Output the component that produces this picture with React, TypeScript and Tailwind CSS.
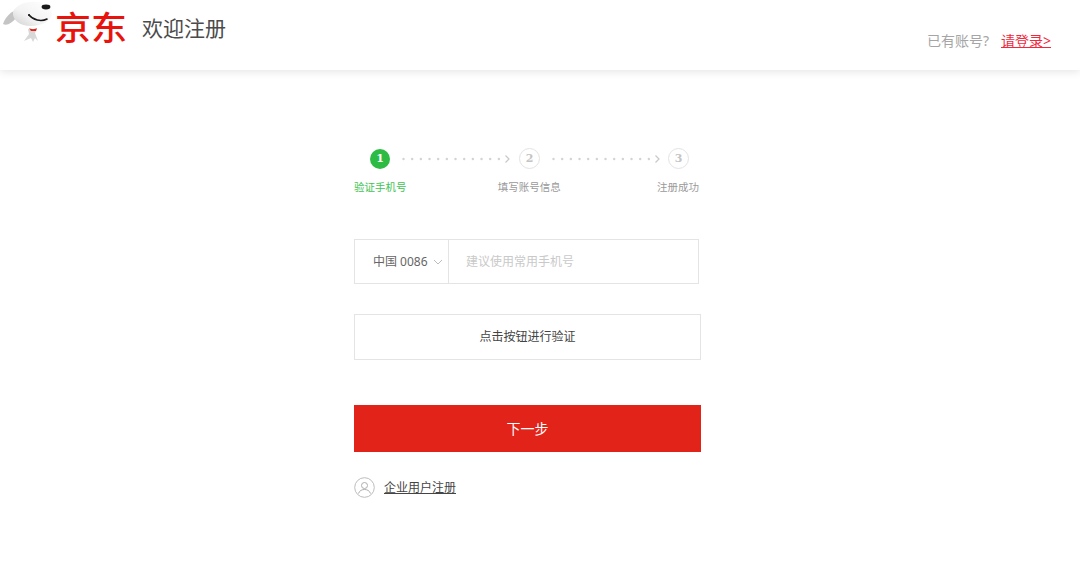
import React from 'react';

const cjk = "font-['Noto_Sans','Noto_Sans_CJK_SC',sans-serif]";

const JoyLogo = () => (
  <svg width="54" height="44" viewBox="0 0 54 44" className="shrink-0">
    <defs>
      <linearGradient id="head" x1="1" y1="0" x2="0" y2="1">
        <stop offset="0" stopColor="#ffffff" />
        <stop offset="0.6" stopColor="#f3f3f3" />
        <stop offset="1" stopColor="#cfcfcf" />
      </linearGradient>
    </defs>
    <path d="M15 11 C10 12 5 18 3 24 C7 26 12 23 16 18 Z" fill="#c4c4c4" />
    <path d="M28 29 L37 29 L35 33 L38 41 L35 38 L33 42 L31 38 L24 41 L29 34 Z" fill="#d8d8d8" />
    <path d="M13 12 C16 4 28 1 38 2 C47 3 53 8 52 14 C51 21 42 26 31 26 C20 26 12 20 13 12 Z" fill="url(#head)" />
    <ellipse cx="46" cy="7" rx="4.4" ry="2.4" fill="#1a1a1a" />
    <path d="M29 15 C33 20 41 22 47 19" stroke="#1a1a1a" strokeWidth="1.6" fill="none" strokeLinecap="round" />
    <circle cx="29" cy="15" r="1" fill="#1a1a1a" />
    <path d="M29 28 C31 29.5 35 29.5 37 28 L36 31 L31 31 Z" fill="#e2231a" />
  </svg>
);

const Connector = () => (
  <svg width="110" height="10" viewBox="0 0 110 10" className="shrink-0">
    {Array.from({ length: 12 }).map((_, i) => (
      <circle key={i} cx={1.5 + i * 8.67} cy="5" r="1.2" fill="#d3d3d3" />
    ))}
    <path d="M103.5 1.5 L107 5 L103.5 8.5" stroke="#c8c8c8" strokeWidth="1.2" fill="none" />
  </svg>
);

const StepCircle = ({ n, active }: { n: number; active?: boolean }) => (
  <div
    className={
      active
        ? "w-5 h-5 pt-[1px] rounded-full bg-[#2dbb43] text-white flex items-center justify-center text-[11px] font-bold font-['DejaVu_Serif',serif] shrink-0"
        : "w-[21px] h-[21px] pt-[1px] rounded-full border-[1.5px] border-[#e3e3e3] text-[#c4c4c4] flex items-center justify-center text-[11px] font-bold font-['DejaVu_Serif',serif] shrink-0"
    }
  >
    {n}
  </div>
);

export default function App() {
  return (
    <div className={`w-[1080px] h-[565px] bg-white overflow-hidden ${cjk}`}>
      <header className="h-[70px] bg-white shadow-[0_2px_8px_rgba(0,0,0,0.1)] flex justify-between">
        <div className="flex items-start">
          <JoyLogo />
          <span className="ml-[1px] mt-[6px] text-[36px] leading-[44px] text-[#e8130c] font-medium scale-y-90">京东</span>
          <span className="ml-[15px] mt-[13px] text-[21px] leading-[30px] text-[#4b4b4b]">欢迎注册</span>
        </div>
        <div className="flex items-start pt-[31px] pr-[29px] text-[14px] leading-[20px]">
          <span className="text-[#a5a5a5]">已有账号?</span>
          <a className="ml-[12px] text-[#f0283c] underline">请登录&gt;</a>
        </div>
      </header>

      <main className="ml-[354px] w-[347px] pt-[78px]">
        <div className="flex items-center pl-[16px] h-[21px]">
          <StepCircle n={1} active />
          <div className="ml-[12px]"><Connector /></div>
          <div className="ml-[7px]"><StepCircle n={2} /></div>
          <div className="ml-[12px]"><Connector /></div>
          <div className="ml-[6px]"><StepCircle n={3} /></div>
        </div>
        <div className="mt-[10px] w-[345px] flex justify-between text-[10.5px] leading-[16px] text-[#9a9a9a]">
          <span className="text-[#3fc455]">验证手机号</span>
          <span className="-ml-[5px]">填写账号信息</span>
          <span>注册成功</span>
        </div>

        <div className="mt-[44px] w-[345px] h-[45px] border border-[#e4e4e4] flex items-center">
          <div className="w-[94px] h-full border-r border-[#e4e4e4] flex items-center pl-[18px] text-[12px] text-[#666666] shrink-0">
            <span>中国 0086</span>
            <svg width="10" height="6" viewBox="0 0 10 6" className="ml-[5px]">
              <path d="M1 1 L5 5 L9 1" stroke="#b5b5b5" strokeWidth="0.9" fill="none" />
            </svg>
          </div>
          <span className="pl-[17px] text-[12px] text-[#c9c9c9]">建议使用常用手机号</span>
        </div>

        <button className="mt-[30px] w-[347px] h-[46px] border border-[#e4e4e4] bg-white text-[12px] text-[#444444] flex items-center justify-center">
          点击按钮进行验证
        </button>

        <button className="mt-[45px] w-[347px] h-[47px] bg-[#e2231a] text-white text-[14px] flex items-center justify-center">
          下一步
        </button>

        <div className="mt-[25px] flex items-center h-[21px]">
          <svg width="21" height="21" viewBox="0 0 21 21" className="shrink-0">
            <circle cx="10.5" cy="10.5" r="9.8" stroke="#bdbdbd" strokeWidth="1" fill="none" />
            <circle cx="10.5" cy="8.5" r="3" stroke="#adadad" strokeWidth="1" fill="none" />
            <path d="M4.5 16.5 C5.5 13.5 8 12.5 10.5 12.5 C13 12.5 15.5 13.5 16.5 16.5" stroke="#adadad" strokeWidth="1" fill="none" />
          </svg>
          <a className="ml-[9px] text-[12px] text-[#444444] underline">企业用户注册</a>
        </div>
      </main>
    </div>
  );
}
